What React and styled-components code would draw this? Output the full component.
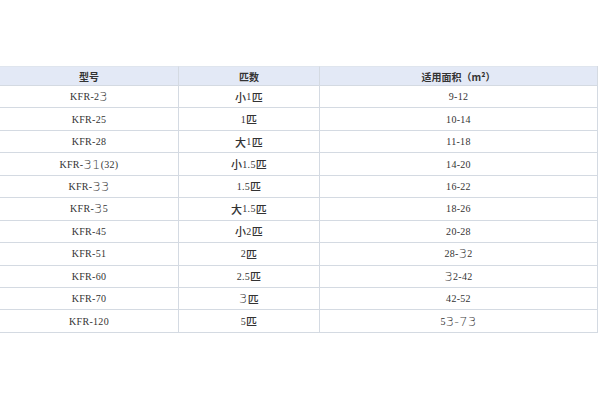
import React from 'react'
import styled, { createGlobalStyle } from 'styled-components'

const Global = createGlobalStyle`
  html, body { margin: 0; padding: 0; background: #fff; }
  body { width: 600px; height: 400px; overflow: hidden; }
`

const Page = styled.div`
  width: 600px;
  height: 400px;
  padding-top: 66px;
  box-sizing: border-box;
  font-family: "Liberation Serif", "Noto Sans CJK SC", serif;
  color: #333;
`

const Table = styled.div`
  display: grid;
  grid-template-columns: 178px 141px 278px;
  grid-template-rows: 19px repeat(11, 22.45px);
  width: 597px;
  border-right: 1px solid #d4dae2;
  border-bottom: 1px solid #d4dae2;
  box-sizing: content-box;
`

const Cell = styled.div`
  display: flex;
  align-items: center;
  justify-content: center;
  font-size: 10px;
  border-top: 1px solid ${ p => p.head ? '#dfe5ee' : '#d4dae2' };
  border-left: ${ p => p.first ? 'none' : '1px solid #d4dae2' };
  background: ${ p => p.head ? '#e3e9f6' : '#fff' };
  font-weight: ${ p => p.head ? 700 : 400 };
  font-family: ${ p => p.head ? '"Noto Sans CJK SC", sans-serif' : 'inherit' };
  letter-spacing: ${ p => p.head ? '0' : '0.3px' };
  white-space: nowrap;
  box-sizing: border-box;
`

const Big = styled.span`
  font-family: "DejaVu Sans", sans-serif;
  font-size: 13px;
  font-weight: 300;
  color: #444;
`

const Zh = styled.span`
  font-family: "Noto Sans CJK SC", sans-serif;
  font-size: 11px;
  font-weight: 500;
`

const rows = [
  [<>KFR-2<Big>3</Big></>, <><Zh>小</Zh>1<Zh>匹</Zh></>, '9-12'],
  ['KFR-25', <>1<Zh>匹</Zh></>, '10-14'],
  ['KFR-28', <><Zh>大</Zh>1<Zh>匹</Zh></>, '11-18'],
  [<>KFR-<Big>31</Big> (32)</>, <><Zh>小</Zh>1.5<Zh>匹</Zh></>, '14-20'],
  [<>KFR-<Big>33</Big></>, <>1.5<Zh>匹</Zh></>, '16-22'],
  [<>KFR-<Big>3</Big>5</>, <><Zh>大</Zh>1.5<Zh>匹</Zh></>, '18-26'],
  ['KFR-45', <><Zh>小</Zh>2<Zh>匹</Zh></>, '20-28'],
  ['KFR-51', <>2<Zh>匹</Zh></>, <>28-<Big>3</Big>2</>],
  ['KFR-60', <>2.5<Zh>匹</Zh></>, <><Big>3</Big>2-42</>],
  ['KFR-70', <><Big>3</Big><Zh>匹</Zh></>, '42-52'],
  ['KFR-120', <>5<Zh>匹</Zh></>, <>5<Big>3-73</Big></>],
]

export default function App() {
  return (
    <Page>
      <Global />
      <Table>
        <Cell head first>型号</Cell>
        <Cell head>匹数</Cell>
        <Cell head>适用面积（m²）</Cell>
        {rows.map((r, i) => (
          <React.Fragment key={i}>
            <Cell first>{r[0]}</Cell>
            <Cell>{r[1]}</Cell>
            <Cell>{r[2]}</Cell>
          </React.Fragment>
        ))}
      </Table>
    </Page>
  )
}
